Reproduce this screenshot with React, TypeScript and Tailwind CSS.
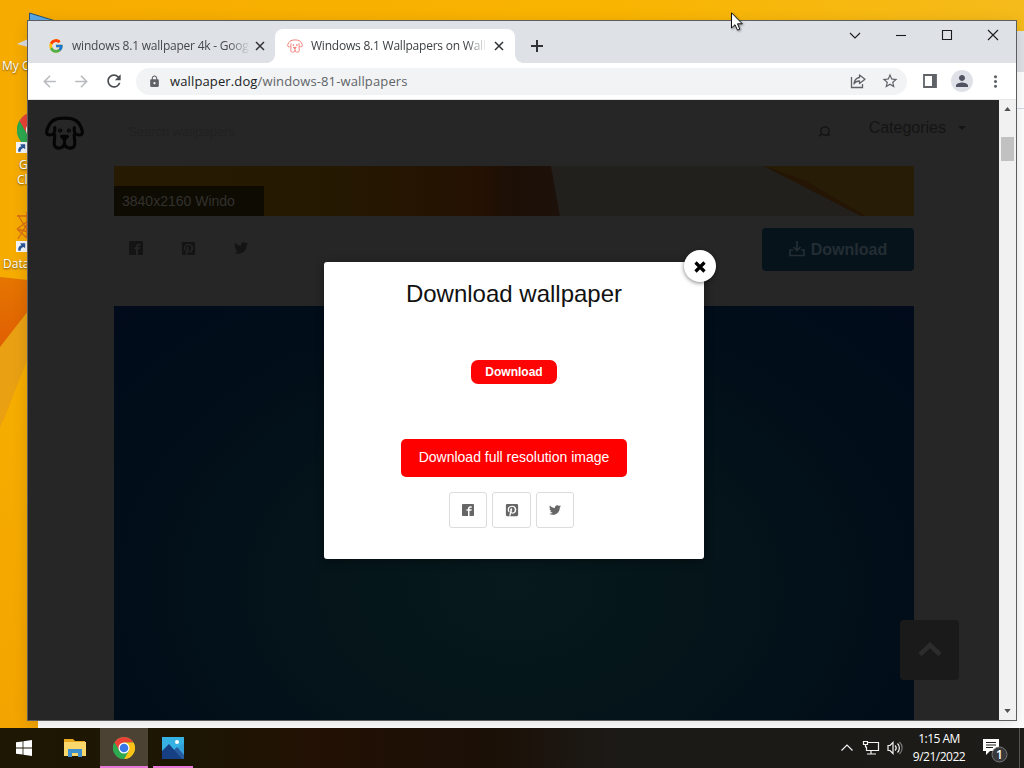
import { FcGoogle } from "react-icons/fc";
import { FaPinterestSquare, FaTwitter } from "react-icons/fa";
import { ImFacebook2 } from "react-icons/im";
import { MdArrowBack, MdArrowForward, MdRefresh, MdLock, MdStarOutline, MdPerson, MdMoreVert } from "react-icons/md";

const DogIcon = ({ className, stroke = 2 }: { className: string; stroke?: number }) => (
  <svg viewBox="0 0 40 34" className={className} fill="none" stroke="currentColor" strokeWidth={stroke} strokeLinecap="round" strokeLinejoin="round">
    <path d="M10 3.500C13 1.200 27 1.200 30 3.500C35 5 38.500 13 38.300 16.500C38 20 33 19.500 31 17.500C29.500 16 30 13.500 30 11.500" />
    <path d="M10 3.500C5 5 1.500 13 1.700 16.500C2 20 7 19.500 9 17.500C10.500 16 10 13.500 10 11.500" />
    <path d="M10 19C10 25 8 29.500 11 31.500C14 33.500 19 32.500 20 28.500C21 32.500 26 33.500 29 31.500C32 29.500 30 25 30 19" />
    <path d="M20 22V29M17 20.500H23L20 23.500Z" />
    <circle cx="15.500" cy="14.500" r="0.600" fill="currentColor" />
    <circle cx="24.500" cy="14.500" r="0.600" fill="currentColor" />
  </svg>
);

const ChromeIcon = ({ className }: { className: string }) => (
  <svg viewBox="0 0 24 24" className={className}>
    <circle cx="12" cy="12" r="12" fill="#2da94f" />
    <path d="M12 12L1.600 6A12 12 0 0 1 22.400 6H12Z" fill="#ea4335" />
    <path d="M12 6H22.400A12 12 0 0 1 12 24L17.200 15Z" fill="#fbc116" />
    <path d="M1.600 6L6.800 15L12 12L12 6Z" fill="#ea4335" />
    <path d="M1.600 6A12 12 0 0 0 12 24L17.200 15H6.800Z" fill="#2da94f" />
    <circle cx="12" cy="12" r="6" fill="#fff" />
    <circle cx="12" cy="12" r="4.700" fill="#3b78e7" />
  </svg>
);

const ShortcutArrow = ({ className }: { className: string }) => (
  <svg viewBox="0 0 12 12" className={className}>
    <path d="M0 0H12V12H0Z" fill="#f4f6f8" />
    <path d="M2.500 10.500C2 7 3.500 5 6 4.500L4.500 2.500H10V8L8.300 6.500C6 7 5 8.500 5 10.500Z" fill="#2b5797" />
  </svg>
);

const Wallpaper = () => (
  <svg viewBox="0 0 1024 768" className="absolute inset-0 h-full w-full">
    <defs>
      <linearGradient id="sky" x1="0" y1="0" x2="1" y2="0">
        <stop offset="0" stopColor="#f6ab00" />
        <stop offset="0.6" stopColor="#f9b401" />
        <stop offset="1" stopColor="#f5bb1b" />
      </linearGradient>
      <linearGradient id="fold" x1="0" y1="0" x2="0" y2="1">
        <stop offset="0" stopColor="#e57500" />
        <stop offset="0.5" stopColor="#e05f04" />
        <stop offset="1" stopColor="#e26104" />
      </linearGradient>
      <linearGradient id="lower" x1="0" y1="0" x2="0" y2="1">
        <stop offset="0" stopColor="#f6ae00" />
        <stop offset="1" stopColor="#f3a400" />
      </linearGradient>
    </defs>
    <path d="M0 0H1024V768H0Z" fill="url(#sky)" />
    <path d="M0 277L28 280V420H0Z" fill="url(#fold)" />
    <path d="M0 347L28 311V360L0 428Z" fill="#e9a013" />
    <path d="M0 428L28 358V350H40V728H0Z" fill="url(#lower)" />
  </svg>
);

const DesktopIcons = () => (
  <div className="absolute top-0 left-0 h-[300px] w-[60px] overflow-hidden text-[12px] leading-[15px] whitespace-nowrap text-white [text-shadow:0_1px_2px_rgba(0,0,0,0.55)]">
    <svg viewBox="0 0 60 50" className="absolute top-0 left-0 h-[50px] w-[60px]">
      <path d="M29.500 13L54 20.500H29.500Z" fill="#58a9e8" stroke="#27506f" />
      <path d="M17 44L28 39V47Z" fill="#d9dcdf" />
    </svg>
    <span className="absolute top-[58px] left-[2px]">My C</span>
    <ChromeIcon className="absolute top-[112px] left-[17px] h-9 w-9" />
    <ShortcutArrow className="absolute top-[142px] left-4 h-[11px] w-[11px]" />
    <span className="absolute top-[157px] left-[19px]">G</span>
    <span className="absolute top-[172px] left-[17px]">Cl</span>
    <svg viewBox="0 0 14 28" className="absolute top-[212px] left-[15px] h-7 w-3.5" fill="none" stroke="#d96f12" strokeWidth="1.300">
      <path d="M2 4H13M3 3L12 18M12 0V26M2 17L13 9M2 17L12 26M3 27L12 12M2 17L14 20" />
    </svg>
    <ShortcutArrow className="absolute top-[241px] left-4 h-[11px] w-[11px]" />
    <span className="absolute top-[256px] left-[3px]">Data</span>
  </div>
);

// second browser window, mostly hidden by the front one
const BackWindow = () => (
  <div className="absolute top-[31px] left-[38px] flex h-[697px] w-[986px] flex-col bg-white">
    <div className="h-[41px] bg-[#dee1e6]" />
    <div className="h-[37px] border-b border-[#d5d8e8]" />
  </div>
);

const TabClose = () => (
  <svg viewBox="0 0 10 10" className="h-[10px] w-[10px] shrink-0" stroke="#303236" strokeWidth="1.500">
    <path d="M1 1L9 9M9 1L1 9" />
  </svg>
);

const TabStrip = () => (
  <div className="flex h-[42px] items-end bg-[#dee1e6]">
    <div className="flex h-[34px] w-[247px] items-center pl-5">
      <FcGoogle className="h-4 w-4 shrink-0" />
      <span className="ml-2 w-[178px] shrink-0 text-[12px] tracking-[-0.22px] whitespace-nowrap text-[#45484d] [mask-image:linear-gradient(to_right,#000_88%,transparent)]">
        windows 8.1 wallpaper 4k - Goog
      </span>
      <span className="ml-[5px]"><TabClose /></span>
    </div>
    <div className="relative flex h-[34px] w-[240px] items-center rounded-t-lg bg-white pl-3">
      <div className="absolute bottom-0 -left-2 h-2 w-2 bg-[radial-gradient(circle_at_0_0,#dee1e6_7.5px,#fff_8px)]" />
      <div className="absolute -right-2 bottom-0 h-2 w-2 bg-[radial-gradient(circle_at_100%_0,#dee1e6_7.5px,#fff_8px)]" />
      <DogIcon className="h-[14px] w-4 shrink-0 text-[#f0736c]" stroke={2.2} />
      <span className="ml-2 w-[176px] shrink-0 text-[12px] tracking-[-0.22px] whitespace-nowrap text-[#3c4043] [mask-image:linear-gradient(to_right,#000_88%,transparent)]">
        Windows 8.1 Wallpapers on Wall
      </span>
      <span className="ml-[7px]"><TabClose /></span>
    </div>
    <svg viewBox="0 0 12 12" className="mb-[11px] ml-4 h-3 w-3" stroke="#303236" strokeWidth="2">
      <path d="M6 0V12M0 6H12" />
    </svg>
    <svg viewBox="0 0 150 12" className="mr-[17px] mb-[22px] ml-auto h-3 w-[150px]" fill="none" stroke="#1b1c1e" strokeWidth="1.100">
      <path d="M1 4L6 9L11 4" />
      <path d="M47 6.500H57" />
      <path d="M93.500 1.500H102.500V10.500H93.500Z" />
      <path d="M139 1L149 11M149 1L139 11" />
    </svg>
  </div>
);

const Toolbar = () => (
  <div className="flex h-[37px] items-center border-b border-[#e4e5e7] bg-white pl-3 text-[#5f6368]">
    <MdArrowBack className="h-[19px] w-[19px] text-[#b9bbbe]" />
    <MdArrowForward className="ml-[13px] h-[19px] w-[19px] text-[#b9bbbe]" />
    <MdRefresh className="ml-[13px] h-5 w-5 text-[#4a4d51]" />
    <div className="ml-3 flex h-[27px] w-[771px] items-center rounded-full bg-[#f1f3f4] pl-3">
      <MdLock className="h-[13px] w-[13px]" />
      <span className="mt-px ml-[9px] text-[13px] tracking-[0.13px] whitespace-nowrap text-[#5f6368]">
        <span className="text-[#202124]">wallpaper.dog</span>/windows-81-wallpapers
      </span>
      <svg viewBox="0 0 16 16" className="mr-[15px] ml-auto h-4 w-4" fill="none" stroke="currentColor" strokeWidth="1.300">
        <path d="M1.500 4V14.500H12.500V11" />
        <path d="M9.500 2L15 6.200L9.500 10.500V8C7 8 5 9 4 11C4.300 7.500 6 5 9.500 4.500Z" strokeLinejoin="round" />
      </svg>
      <MdStarOutline className="mr-2 h-[18px] w-[18px]" />
    </div>
    <svg viewBox="0 0 14 14" className="ml-4 h-[14px] w-[14px]">
      <path d="M1 1H13V13H1Z" fill="none" stroke="#5f6368" strokeWidth="1.800" />
      <path d="M9 1H13V13H9Z" fill="#5f6368" />
    </svg>
    <div className="ml-[14px] flex h-[22px] w-[22px] items-center justify-center rounded-full bg-[#dfe1e9]">
      <MdPerson className="h-[18px] w-[18px] text-[#505361]" />
    </div>
    <MdMoreVert className="ml-[13px] h-[19px] w-[19px]" />
  </div>
);

const SiteHeader = () => (
  <div className="flex h-[66px] items-start px-[17px] pt-4">
    <DogIcon className="h-[34px] w-[39px] text-[#050505]" stroke={3.2} />
    <span className="mt-1.5 ml-11 text-[13px] text-[#212121]">Search wallpapers</span>
    <svg viewBox="0 0 14 14" className="mt-[9px] ml-auto h-[13px] w-[13px]" fill="none" stroke="#131313" strokeWidth="1.500">
      <circle cx="7.500" cy="6.500" r="4.500" />
      <path d="M4 10L1 12M9 10.500H13" />
    </svg>
    <span className="mt-0 ml-[38px] text-[16px] leading-6 text-[#141414]">Categories</span>
    <span className="mt-[10px] mr-[16px] ml-[12px] h-0 w-0 border-x-[4px] border-t-[4px] border-x-transparent border-t-[#141414]" />
  </div>
);

const Banner = () => (
  <div className="relative h-[50px]">
    <svg viewBox="0 0 800 50" className="h-[50px] w-[800px]">
      <defs>
        <linearGradient id="amber">
          <stop offset="0" stopColor="#261b02" />
          <stop offset="0.5" stopColor="#251801" />
          <stop offset="0.82" stopColor="#241102" />
          <stop offset="0.9" stopColor="#1b0f06" />
          <stop offset="1" stopColor="#1d110b" />
        </linearGradient>
      </defs>
      <path d="M0 0H800V50H0Z" fill="#22201c" />
      <path d="M0 0H437L446 50H0Z" fill="url(#amber)" />
      <path d="M650 0H800V50H747Z" fill="#271c06" />
      <path d="M650 0L747 50H752L690 14Z" fill="#241505" />
    </svg>
    <div className="absolute bottom-0 left-0 flex h-[30px] w-[150px] items-center bg-[#0e0b03] pl-2 text-[14px] text-[#32312d]">
      3840x2160 Windo
    </div>
  </div>
);

const SitePage = () => (
  <div className="h-full flex-1 overflow-hidden bg-[#262626] font-['Liberation_Sans',sans-serif]">
    <SiteHeader />
    <div className="ml-[86px] w-[800px]">
      <Banner />
      <div className="flex h-[90px] items-start pt-3">
        <div className="mt-[13px] ml-[15px] flex gap-[38px] text-[#141414]">
          <ImFacebook2 className="h-[14px] w-[14px]" />
          <FaPinterestSquare className="h-[15px] w-[15px]" />
          <FaTwitter className="h-[14px] w-[14px]" />
        </div>
        <div className="ml-auto flex h-[43px] w-[152px] items-center justify-center gap-[6px] rounded bg-[#07131b] text-[#232d33]">
          <svg viewBox="0 0 16 16" className="mb-0.5 h-4 w-4" fill="none" stroke="currentColor" strokeWidth="1.700">
            <path d="M8 0V9M4.500 6L8 9.500L11.500 6M4 9H1V14.500H15V9H12" />
          </svg>
          <span className="text-[16px] font-bold">Download</span>
        </div>
      </div>
      <div className="h-[414px] bg-[radial-gradient(ellipse_at_50%_68%,#07191c_0%,#04141a_40%,#010d19_75%,#010b1b_100%)]" />
    </div>
  </div>
);

const Scrollbar = () => (
  <div className="flex h-full w-[17px] flex-col items-center bg-[#f1f1f1]">
    <svg viewBox="0 0 8 5" className="mt-[7px] h-1 w-[7px]"><path d="M0 5L4 0L8 5Z" fill="#505050" /></svg>
    <div className="mt-[26px] h-6 w-[13px] bg-[#c1c1c1]" />
    <svg viewBox="0 0 8 5" className="mt-auto mb-[7px] h-1 w-[7px]"><path d="M0 0L4 5L8 0Z" fill="#505050" /></svg>
  </div>
);

const shareIcons = [ImFacebook2, FaPinterestSquare, FaTwitter];

const DownloadModal = () => (
  <div className="absolute top-[162px] left-[296px] flex h-[297px] w-[380px] flex-col items-center rounded-[3px] bg-white pt-4 font-['Liberation_Sans',sans-serif] shadow-[0_2px_10px_rgba(0,0,0,0.4)]">
    <button className="absolute -top-3 -right-3 flex h-8 w-8 items-center justify-center rounded-full bg-white shadow-[0_1px_4px_rgba(0,0,0,0.5)]">
      <svg viewBox="0 0 12 12" className="mt-0.5 h-3 w-3" stroke="#000" strokeWidth="3.200">
        <path d="M1.500 1.500L10.500 10.500M10.500 1.500L1.500 10.500" />
      </svg>
    </button>
    <h2 className="text-[24px] leading-8 text-[#111]">Download wallpaper</h2>
    <button className="mt-[50px] h-6 w-[86px] rounded-[7px] bg-[#fd0505] text-[12px] leading-6 font-bold text-white">Download</button>
    <button className="mt-[55px] h-[38px] w-[226px] rounded-[5px] bg-[#fe0000] pb-0.5 text-[14px] text-white">
      Download full resolution image
    </button>
    <div className="mt-[15px] mr-[5px] flex gap-[5px]">
      {shareIcons.map((Icon, i) => (
        <div key={i} className="flex h-9 w-[38.5px] items-center justify-center rounded-[3px] border border-[#dcdcdc] text-[#666666]">
          <Icon className={i === 1 ? "h-[14px] w-[14px]" : "h-3 w-3"} />
        </div>
      ))}
    </div>
  </div>
);

const BrowserWindow = () => (
  <div className="absolute top-5 left-[27px] flex h-[701px] w-[990px] flex-col border border-[#5b5d60] shadow-[0_3px_14px_rgba(0,0,0,0.12)]">
    <TabStrip />
    <Toolbar />
    <div className="relative flex h-[620px]">
      <SitePage />
      <Scrollbar />
      <div className="absolute top-[520px] left-[872px] flex h-[60px] w-[59px] items-center justify-center rounded bg-[#1a1a1a]">
        <svg viewBox="0 0 24 16" className="mb-[3px] h-4 w-6" fill="none" stroke="#2c2c2c" strokeWidth="4.500">
          <path d="M2 13.500L12 4L22 13.500" />
        </svg>
      </div>
      <DownloadModal />
    </div>
  </div>
);

const Taskbar = () => (
  <div className="absolute bottom-0 left-0 flex h-10 w-full items-center bg-[linear-gradient(to_right,#1d1704_0%,#1d1603_18%,#221004_32%,#1b1006_48%,#1c1a17_60%,#1b1a17_80%,#1d1c18_100%)] text-white">
    <svg viewBox="0 0 16 16" className="ml-4 h-4 w-4" fill="#fff">
      <path d="M0 2.300L6.600 1.400V7.500H0ZM7.400 1.300L16 0V7.500H7.400ZM0 8.400H6.600V14.600L0 13.700ZM7.400 8.400H16V16L7.400 14.800Z" />
    </svg>
    <svg viewBox="0 0 22 18" className="ml-8 h-[18px] w-[22px]">
      <path d="M0 0H9L11 2H21V17H0Z" fill="#e8a921" />
      <path d="M0 3H22V17H0Z" fill="#fbd86c" />
      <path d="M4 18V10H18V18H14V14H8V18Z" fill="#3e8fcb" />
    </svg>
    <div className="ml-[14px] flex h-10 w-12 items-center justify-center border-b-2 border-[#e877d9] bg-[#4b4233]">
      <ChromeIcon className="mt-0.5 h-[22px] w-[22px]" />
    </div>
    <div className="ml-[5px] flex h-10 w-10 items-center justify-center border-b-2 border-[#e877d9]">
      <svg viewBox="0 0 22 22" className="mt-0.5 h-[22px] w-[22px]">
        <path d="M0 0H22V22H0Z" fill="#319fd8" />
        <path d="M0 0H22V6L9 15H0Z" fill="#36b1e3" />
        <path d="M10 15L15 10L22 18V22H8Z" fill="#285b9d" />
        <path d="M0 14L7 7L20 22H0Z" fill="#173f83" />
        <circle cx="15" cy="5" r="2" fill="#fff" />
      </svg>
    </div>
    <svg viewBox="0 0 64 16" className="ml-auto h-4 w-16" fill="none" stroke="#f2f2f2" strokeWidth="1.200">
      <path d="M1.500 10.500L7 5L12.500 10.500" />
      <path d="M28 2.500H38.500V10.500H26.500V6.500M31 10.500V14M27 14H36" />
      <path d="M23.500 1.500H27.500V4.500H23.500ZM25.500 4.500V7.500" />
      <path d="M48 5.500H50L53 2.500V13.500L50 10.500H48Z" />
      <path d="M55 5.500C56.500 7 56.500 9 55 10.500M57.500 3.500C60 6 60 10 57.500 12.500" />
      <path d="M59.500 2C63 5.500 63 10.500 59.500 14" stroke="#777" />
    </svg>
    <div className="ml-1 flex w-[62px] flex-col items-center text-[12px] leading-[18px] tracking-[-0.5px] whitespace-nowrap">
      <span>1:15 AM</span>
      <span>9/21/2022</span>
    </div>
    <svg viewBox="0 0 26 26" className="mt-1 ml-[12px] h-[26px] w-[26px]">
      <path d="M1 2H17V14H8L4 18V14H1Z" fill="#fff" />
      <path d="M4 5.500H14M4 8H14M4 10.500H11" stroke="#1d1c18" strokeWidth="1" />
      <circle cx="17.500" cy="17.500" r="7.500" fill="#38383a" stroke="#77777a" />
      <text x="17.500" y="21.500" textAnchor="middle" fontSize="12" fontWeight="600" fill="#fff">1</text>
    </svg>
    <div className="ml-[11px] mr-1 h-10 w-px bg-[#55534f]" />
  </div>
);

const Cursor = () => (
  <svg viewBox="0 0 14 21" className="absolute top-3 left-[731px] h-[21px] w-[14px] drop-shadow-[1px_1px_1px_rgba(0,0,0,0.4)]">
    <path d="M0.500 0.800V16L4 12.700L6.500 18.200L8.800 17.200L6.500 11.800H11.300Z" fill="#fff" stroke="#111" />
  </svg>
);

export default function App() {
  return (
    <div className="relative h-[768px] w-[1024px] overflow-hidden font-['Open_Sans','Noto_Sans',sans-serif]">
      <Wallpaper />
      <DesktopIcons />
      <BackWindow />
      <BrowserWindow />
      <Taskbar />
      <Cursor />
    </div>
  );
}
